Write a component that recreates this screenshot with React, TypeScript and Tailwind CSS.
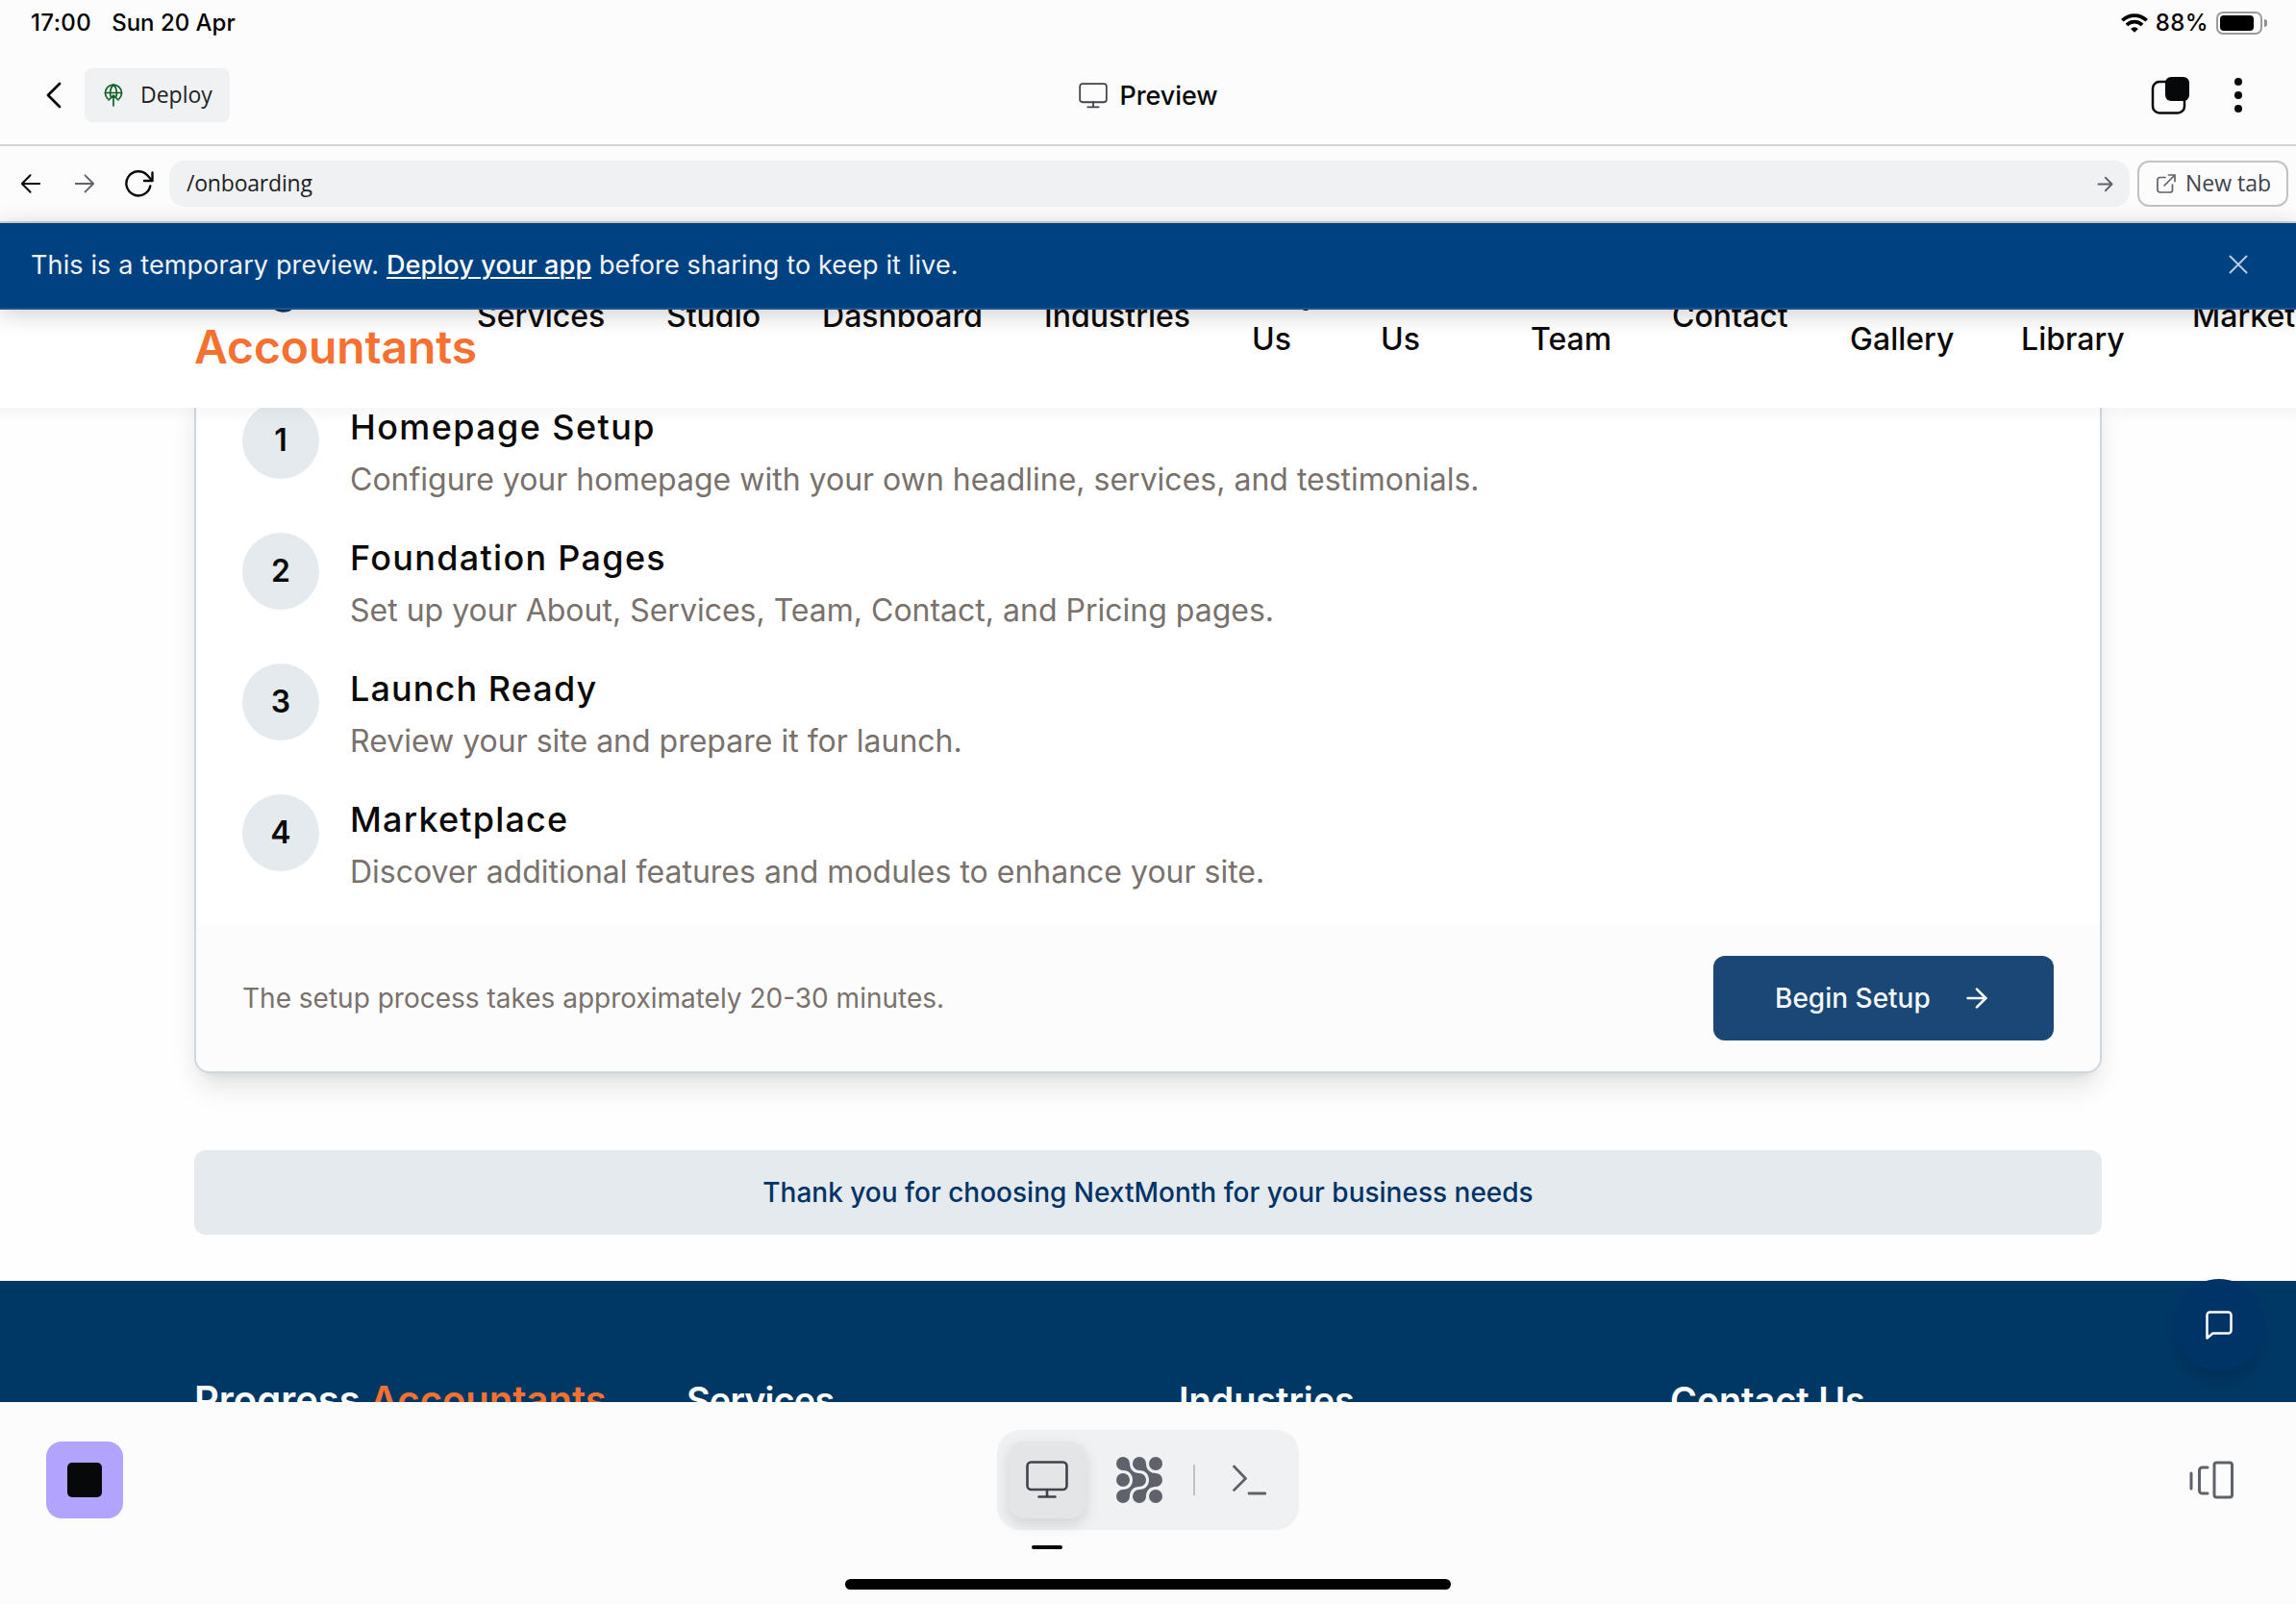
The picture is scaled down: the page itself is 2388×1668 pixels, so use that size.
import React from "react";
import { ArrowRight } from "lucide-react";

const steps = [
  { n: 1, title: "Homepage Setup", tk: "tracking-[1.4px]", text: "Configure your homepage with your own headline, services, and testimonials." },
  { n: 2, title: "Foundation Pages", tk: "tracking-[1.3px]", text: "Set up your About, Services, Team, Contact, and Pricing pages." },
  { n: 3, title: "Launch Ready", tk: "tracking-[1.1px]", text: "Review your site and prepare it for launch." },
  { n: 4, title: "Marketplace", tk: "tracking-[1.2px]", text: "Discover additional features and modules to enhance your site." },
];

function Monitor({ className }: { className: string }) {
  return (
    <svg viewBox="0 0 44 40" fill="none" stroke="currentColor" strokeWidth="2.6" strokeLinecap="round" strokeLinejoin="round" className={className}>
      <rect x="1.5" y="1.5" width="41" height="28.5" rx="4" />
      <path d="M22 30v7.5M13.5 37.5h17" />
    </svg>
  );
}

function Arrow({ className, w = 2 }: { className: string; w?: number }) {
  return (
    <svg viewBox="0 0 24 24" fill="none" stroke="currentColor" strokeWidth={w} strokeLinecap="round" strokeLinejoin="round" className={className}>
      <path d="M2 12h20M12.5 2.500 22 12l-9.500 9.500" />
    </svg>
  );
}

function StatusBar() {
  return (
    <div className="flex h-12 items-center justify-between pl-8 pr-[30px] text-[24px] font-medium text-black">
      <div className="flex gap-[21px]">
        <span className="tracking-[0.4px]">17:00</span>
        <span className="tracking-[0px]">Sun 20 Apr</span>
      </div>
      <div className="flex items-center">
        <svg viewBox="0 0 28 20" className="mr-[8px] h-5 w-7" fill="none" stroke="#000" strokeWidth="3.7">
          <path d="M1.300 7.300a18 18 0 0 1 25.400 0" />
          <path d="M5.900 12a11.500 11.500 0 0 1 16.200 0" />
          <path d="M14 19.800l-3.900-3.900a5.500 5.500 0 0 1 7.800 0z" fill="#000" stroke="none" />
        </svg>
        <span className="mr-[8px] tracking-[0.4px]">88%</span>
        <div className="h-6 w-12 rounded-[7px] border-2 border-[#9b9b9b] p-[2px]">
          <div className="h-4 w-[35px] rounded-[4px] bg-black" />
        </div>
        <div className="ml-[2px] h-2 w-[3px] rounded-r-full bg-[#8f8f8f]" />
      </div>
    </div>
  );
}

function AppBar() {
  return (
    <div className="flex h-[104px] items-start justify-between border-b-2 border-[#d3d3d4] px-[47px] pt-[23px]">
      <div className="flex w-[600px] items-center">
        <svg viewBox="0 0 18 28" className="mr-[23px] h-7 w-[18px]" fill="none" stroke="#07080a" strokeWidth="2.800" strokeLinecap="round" strokeLinejoin="round">
          <path d="M15 2 3 14l12 12" />
        </svg>
        <div className="flex h-14 w-[151px] items-center rounded-lg bg-[#f0f1f3] pl-5 text-[23px] text-[#1d1f24]">
          <svg viewBox="0 0 20 24" className="mr-[18px] h-6 w-5" fill="none" stroke="#0f5f24" strokeWidth="1.700" strokeLinecap="round" strokeLinejoin="round">
            <path d="M4 15.700a8.500 8.500 0 1 1 12 0" />
            <path d="M1.500 9.500h17M7 13C5.800 8.500 7.500 3 10 1.200 12.500 3 14.200 8.500 13 13" />
            <path d="M10 23V12.500M5 17l5-4.800L15 17" />
          </svg>
          <span className="pb-[2px] font-['Open_Sans']">Deploy</span>
        </div>
      </div>
      <div className="flex h-14 items-center pl-[1px]">
        <Monitor className="mr-[12px] h-[27px] w-[30px] text-[#40434b]" />
        <span className="pt-[2px] text-[27px] font-medium tracking-[-0.1px] text-[#07080a]">Preview</span>
      </div>
      <div className="flex h-14 w-[600px] items-center justify-end">
        <svg viewBox="0 0 40 40" className="mr-[47px] h-10 w-10">
          <rect x="2" y="6" width="33" height="32.500" rx="7" fill="none" stroke="#07080a" strokeWidth="2.500" />
          <rect x="15" y="1" width="25" height="25" rx="6" fill="#07080a" />
        </svg>
        <div className="mr-[9px] flex w-2 flex-col gap-[6px]">
          <i className="h-2 w-2 rounded-full bg-[#07080a]" />
          <i className="h-2 w-2 rounded-full bg-[#07080a]" />
          <i className="h-2 w-2 rounded-full bg-[#07080a]" />
        </div>
      </div>
    </div>
  );
}

function UrlBar() {
  return (
    <div className="flex h-20 items-center border-b-2 border-[#d3d3d4] pl-[21px] pr-2">
      <Arrow w={2.2} className="h-[22px] w-[22px] rotate-180 text-[#07080a]" />
      <Arrow w={2} className="ml-[34px] h-[22px] w-[22px] text-[#5f626a]" />
      <svg viewBox="0 0 30 28" className="ml-[31px] h-7 w-[30px]" fill="none" stroke="#07080a" strokeWidth="2.400" strokeLinecap="round" strokeLinejoin="round">
        <path d="M26.300 16.500A12.600 12.600 0 1 1 23 5l5 5.500" />
        <path d="M28.500 2.500v8.500h-8.500" />
      </svg>
      <div className="ml-4 flex h-12 flex-1 items-center justify-between rounded-[16px] bg-[#f0f1f3] pl-[18px] pr-[17px] text-[23px] text-[#1d1f24]">
        <span className="pb-[2px] font-['Open_Sans'] tracking-[-0.2px]">/onboarding</span>
        <Arrow w={2.600} className="h-[17px] w-[17px] text-[#5f626a]" />
      </div>
      <div className="ml-2 flex h-12 w-[157px] items-center rounded-[12px] border-2 border-[#c0c3c4] pl-[18px] text-[23px] text-[#40434b]">
        <svg viewBox="0 0 20 20" className="mr-[10px] h-5 w-5" fill="none" stroke="#5f626a" strokeWidth="1.700" strokeLinecap="round" strokeLinejoin="round">
          <path d="M9 3.500H3.500a2.500 2.500 0 0 0-2.500 2.500v10.500a2.500 2.500 0 0 0 2.500 2.500h10.500a2.500 2.500 0 0 0 2.500-2.500V11" />
          <path d="M8 12 19 1M12.500 1H19v6.500" />
        </svg>
        <span className="pb-[2px] font-['Open_Sans'] whitespace-nowrap">New tab</span>
      </div>
    </div>
  );
}

function Banner() {
  return (
    <div className="relative z-30 flex h-[90px] items-center justify-between border-b-2 border-[#1b5490] bg-[#004182] pl-8 pr-[50px] text-[27px] text-[#f0f4f9] shadow-[0_4px_24px_rgba(0,0,0,0.2)]">
      <span className="tracking-[0.13px]">
        This is a temporary preview.{" "}
        <span className="font-medium text-white underline decoration-2 underline-offset-[3px]">Deploy your app</span> before sharing to keep it live.
      </span>
      <svg viewBox="0 0 20 20" className="mb-[2px] h-5 w-5" fill="none" stroke="#b9cbe0" strokeWidth="2" strokeLinecap="round">
        <path d="M1.500 1.500l17 17M18.500 1.500l-17 17" />
      </svg>
    </div>
  );
}

function SiteNav() {
  return (
    <div className="relative z-20 h-[102px] overflow-hidden bg-white">
      <div className="-mt-[60px] flex items-start pl-[202px] font-medium text-[#0c0a09]">
        <div className="w-[296px] pt-[3px] text-[48px] leading-[64px] font-semibold tracking-[-0.1px] text-[#003865]">
          Progress
          <br />
          <span className="text-[#f47132]">Accountants</span>
        </div>
        <div className="flex whitespace-nowrap pt-[19px] text-[32px] leading-[48px]">
          <span className="w-[197px] pt-6">Services</span>
          <span className="w-[162px] pt-6">Studio</span>
          <span className="w-[231px] pt-6">Dashboard</span>
          <span className="w-[216px] pt-6">Industries</span>
          <span className="w-[134px]">Why<br />Us</span>
          <span className="w-[156px] pt-12">Us</span>
          <span className="w-[147px] pt-12">Team</span>
          <span className="w-[185px] pt-6">Contact</span>
          <span className="w-[178px] pt-12">Gallery</span>
          <span className="w-[178px] pt-12">Library</span>
          <span className="pt-6">Marketplace</span>
        </div>
      </div>
    </div>
  );
}

function SetupCard() {
  return (
    <div className="-mt-[38px] rounded-[16px] border-2 border-[#ccd7e0] bg-white shadow-[0_20px_30px_-6px_rgba(0,0,0,0.1),0_8px_12px_-8px_rgba(0,0,0,0.1),0_0_30px_rgba(0,0,0,0.03)]">
      <div className="flex h-[558px] flex-col gap-14 px-12 pt-[14px]">
        {steps.map((s) => (
          <div key={s.n} className="flex h-20 gap-8">
            <div className="flex h-20 w-20 items-center justify-center rounded-full bg-[#e5eaee] text-[32px] font-semibold text-[#0c0a09]">{s.n}</div>
            <div>
              <h3 className={"-mt-[2px] text-[36px] leading-[56px] font-medium text-[#0c0a09] " + s.tk}>{s.title}</h3>
              <p className="mt-[3px] text-[32px] leading-[48px] text-[#78716c]">{s.text}</p>
            </div>
          </div>
        ))}
      </div>
      <div className="flex h-[152px] items-center justify-between rounded-b-[14px] bg-[#fcfcfc] px-12">
        <span className="text-[28px] text-[#78716c]">The setup process takes approximately 20-30 minutes.</span>
        <div className="flex h-[88px] w-[354px] items-center rounded-[12px] bg-[#1a4775] pl-16 text-[28px] font-medium text-[#f5f8fa]">
          <span className="w-[194px]">Begin Setup</span>
          <ArrowRight className="h-8 w-8" strokeWidth={2} />
        </div>
      </div>
    </div>
  );
}

function SiteFooter() {
  return (
    <div className="relative h-[126px] bg-[#003865] pl-[202px]">
      <div className="flex h-full overflow-hidden pt-[100px] text-[38px] leading-[48px] font-semibold text-white">
        <span className="w-[512px] text-[40px] whitespace-nowrap">Progress <span className="text-[#f47132]">Accountants</span></span>
        <span className="w-[512px] tracking-[-0.9px]">Services</span>
        <span className="w-[511px] tracking-[-0.1px]">Industries</span>
        <span className="tracking-[-0.1px]">Contact Us</span>
      </div>
      <div className="absolute -top-[2px] right-8 flex h-24 w-24 items-center justify-center rounded-full bg-[#003366] shadow-[0_16px_20px_-6px_rgba(0,0,0,0.16)]">
        <svg viewBox="0 0 28 30" className="h-[30px] w-7" fill="none" stroke="#fff" strokeWidth="2.500" strokeLinejoin="round">
          <path d="M26.500 20.500a3 3 0 0 1-3 3H7.500l-6 5V4.500a3 3 0 0 1 3-3h19a3 3 0 0 1 3 3z" />
        </svg>
      </div>
    </div>
  );
}

function BottomBar() {
  return (
    <div className="relative z-10 flex h-[210px] flex-col bg-[#fcfcfd]">
      <div className="mt-[29px] flex h-[104px] items-center justify-between pl-12 pr-16">
        <div className="flex w-[400px]">
          <div className="flex h-20 w-20 items-center justify-center rounded-[16px] bg-[#b1a3fe]">
            <div className="h-9 w-9 rounded-[5px] bg-[#07080a]" />
          </div>
        </div>
        <div className="ml-4 flex h-[104px] w-[314px] items-center rounded-[24px] bg-[#f0f1f3] pl-3">
          <div className="flex h-20 w-20 items-center justify-center rounded-[16px] bg-[#e4e5e7] shadow-[0_6px_16px_rgba(0,0,0,0.13)]">
            <Monitor className="h-10 w-11 text-[#40434b]" />
          </div>
          <svg viewBox="0 0 48 48" className="ml-8 h-12 w-12" fill="#5f626a">
            <circle cx="41" cy="7" r="7" />
            <circle cx="7" cy="24" r="7" />
            <circle cx="41" cy="41" r="7" />
            <path d="M14 7C14 13 18 17 24 17A7 7 0 0 1 24 31C18 31 14 35 14 41A7 7 0 1 1 7 34C13 34 17 30 17 24C17 18 13 14 7 14A7 7 0 1 1 14 7Z" />
            <path d="M31 7C31 13 35 17 41 17A7 7 0 0 1 41 31C35 31 31 35 31 41A7 7 0 1 1 24 34C30 34 34 30 34 24C34 18 30 14 24 14A7 7 0 1 1 31 7Z" />
          </svg>
          <div className="ml-8 h-8 w-[2px] bg-[#bfc0c3]" />
          <svg viewBox="0 0 36 32" className="ml-[38px] h-8 w-9" fill="none" stroke="#5f626a" strokeWidth="2.800" strokeLinecap="round" strokeLinejoin="round">
            <path d="M2.500 2 14.500 14.500 2.500 26.500M18 30h17" />
          </svg>
        </div>
        <div className="flex w-[400px] justify-end">
          <svg viewBox="0 0 48 40" className="h-10 w-12" fill="none" stroke="#5f626a" strokeWidth="3" strokeLinecap="round" strokeLinejoin="round">
            <rect x="27" y="2" width="18.500" height="36" rx="2.500" />
            <path d="M20 7h-5.500a3 3 0 0 0-3 3v21a3 3 0 0 0 3 3H20M3 13v16" />
          </svg>
        </div>
      </div>
      <div className="ml-[1073px] mt-4 h-1 w-8 rounded-full bg-[#07080a]" />
      <div className="mt-[31px] h-[11px] w-[630px] self-center rounded-full bg-black" />
    </div>
  );
}

export default function App() {
  return (
    <div className="flex h-[1668px] w-[2388px] flex-col overflow-hidden bg-[#fcfcfd] font-['Inter',sans-serif]">
      <StatusBar />
      <AppBar />
      <UrlBar />
      <Banner />
      <SiteNav />
      <div className="h-[908px] bg-[#fefefe]">
        <div className="relative z-20 -mb-[16px] h-[16px] bg-linear-to-b from-black/3 to-transparent" />
        <div className="px-[202px]">
          <SetupCard />
          <div className="mt-20 flex h-[88px] items-center justify-center rounded-[12px] bg-[#e5eaee] text-[28px] font-medium text-[#003366]">
            Thank you for choosing NextMonth for your business needs
          </div>
        </div>
      </div>
      <SiteFooter />
      <BottomBar />
    </div>
  );
}
